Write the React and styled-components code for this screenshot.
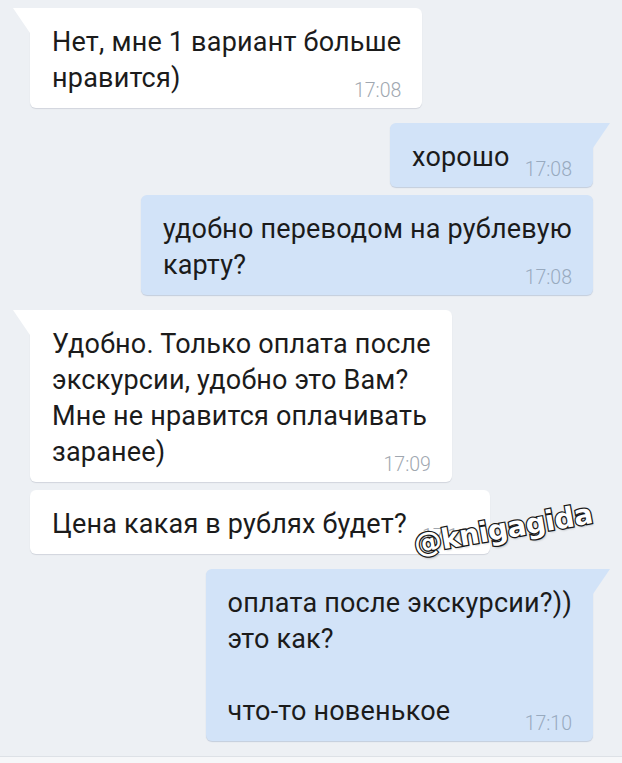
import React from 'react';
import styled, { createGlobalStyle } from 'styled-components';

const GlobalStyle = createGlobalStyle`
  html, body {
    margin: 0;
    padding: 0;
    background: #edf0f4;
  }
  body {
    font-family: Roboto, "Noto Sans", "DejaVu Sans", sans-serif;
  }
`;

const messages = [
  { id: 1, out: false, tail: true, lines: ['Нет, мне 1 вариант больше', 'нравится)'], time: '17:08' },
  { id: 2, out: true, tail: true, lines: ['хорошо'], time: '17:08' },
  { id: 3, out: true, tail: false, lines: ['удобно переводом на рублевую', 'карту?'], time: '17:08' },
  {
    id: 4,
    out: false,
    tail: true,
    lines: ['Удобно. Только оплата после', 'экскурсии, удобно это Вам?', 'Мне не нравится оплачивать', 'заранее)'],
    time: '17:09',
  },
  { id: 5, out: false, tail: false, lines: ['Цена какая в рублях будет?'], time: '17:10' },
  {
    id: 6,
    out: true,
    tail: true,
    lines: ['оплата после экскурсии?))', 'это как?', '', 'что-то новенькое'],
    time: '17:10',
  },
];

const Page = styled.div`
  position: relative;
  width: 622px;
  height: 763px;
  overflow: hidden;
  display: flex;
  flex-direction: column;
`;

const Feed = styled.div`
  flex: 1;
  display: flex;
  flex-direction: column;
  padding: 8px 29px 0 30px;
`;

const Bubble = styled.div`
  position: relative;
  align-self: ${p => (p.$out ? 'flex-end' : 'flex-start')};
  margin-top: ${p => p.$gap}px;
  padding: 16px 21px 12px 22px;
  background: ${p => (p.$out ? '#d2e3f8' : '#ffffff')};
  border-radius: 6px;
  box-shadow: 0 1px 1px ${p => (p.$out ? 'rgba(90, 120, 160, 0.28)' : 'rgba(0, 20, 50, 0.12)')};
  ${p => p.$tail && (p.$out ? 'border-top-right-radius: 0;' : 'border-top-left-radius: 0;')}

  &::before {
    content: '';
    display: ${p => (p.$tail ? 'block' : 'none')};
    position: absolute;
    top: 0;
    ${p => (p.$out ? 'right: -17px;' : 'left: -17px;')}
    width: 17px;
    height: 25px;
    background: ${p => (p.$out ? '#d2e3f8' : '#ffffff')};
    clip-path: ${p =>
      p.$out ? 'polygon(0 0, 100% 0, 0 100%)' : 'polygon(0 0, 100% 0, 100% 100%)'};
  }
`;

const Line = styled.div`
  font-size: 27px;
  letter-spacing: 0.2px;
  line-height: 36px;
  height: 36px;
  color: #1b1b1b;
  white-space: nowrap;
`;

const LastLine = styled(Line)`
  display: flex;
  align-items: flex-end;
  justify-content: space-between;
  gap: 15px;
`;

const Time = styled.span`
  font-size: 19.5px;
  font-weight: 300;
  letter-spacing: 0;
  line-height: 19px;
  margin-bottom: -4px;
  color: ${p => (p.$out ? '#98aabf' : '#a0a7b0')};
`;

const Footer = styled.div`
  height: 6px;
  border-top: 1px solid #dde1e6;
  background: #f6f7f9;
`;

const Watermark = styled.div`
  position: absolute;
  left: 417px;
  top: 528px;
  transform: rotate(-10deg);
  transform-origin: left bottom;
  font-family: "DejaVu Sans", Verdana, sans-serif;
  font-weight: bold;
  font-size: 28px;
  letter-spacing: -0.3px;
  color: #ffffff;
  -webkit-text-stroke: 2.5px #1a1a1a;
  paint-order: stroke fill;
  text-shadow: 1px 2px 2px rgba(0, 0, 0, 0.22);
`;

function Message({ msg, gap }) {
  const body = msg.lines.slice(0, -1);
  const last = msg.lines[msg.lines.length - 1];
  return (
    <Bubble $out={msg.out} $tail={msg.tail} $gap={gap}>
      {body.map((t, i) => (
        <Line key={i}>{t || '\u00a0'}</Line>
      ))}
      <LastLine>
        <span>{last}</span>
        <Time $out={msg.out}>{msg.time}</Time>
      </LastLine>
    </Bubble>
  );
}

export default function App() {
  return (
    <Page>
      <GlobalStyle />
      <Feed>
        {messages.map((m, i) => {
          const prev = messages[i - 1];
          const gap = !prev ? 0 : prev.out === m.out ? 8 : 15;
          return <Message key={m.id} msg={m} gap={gap} />;
        })}
      </Feed>
      <Footer />
      <Watermark>@knigagida</Watermark>
    </Page>
  );
}
